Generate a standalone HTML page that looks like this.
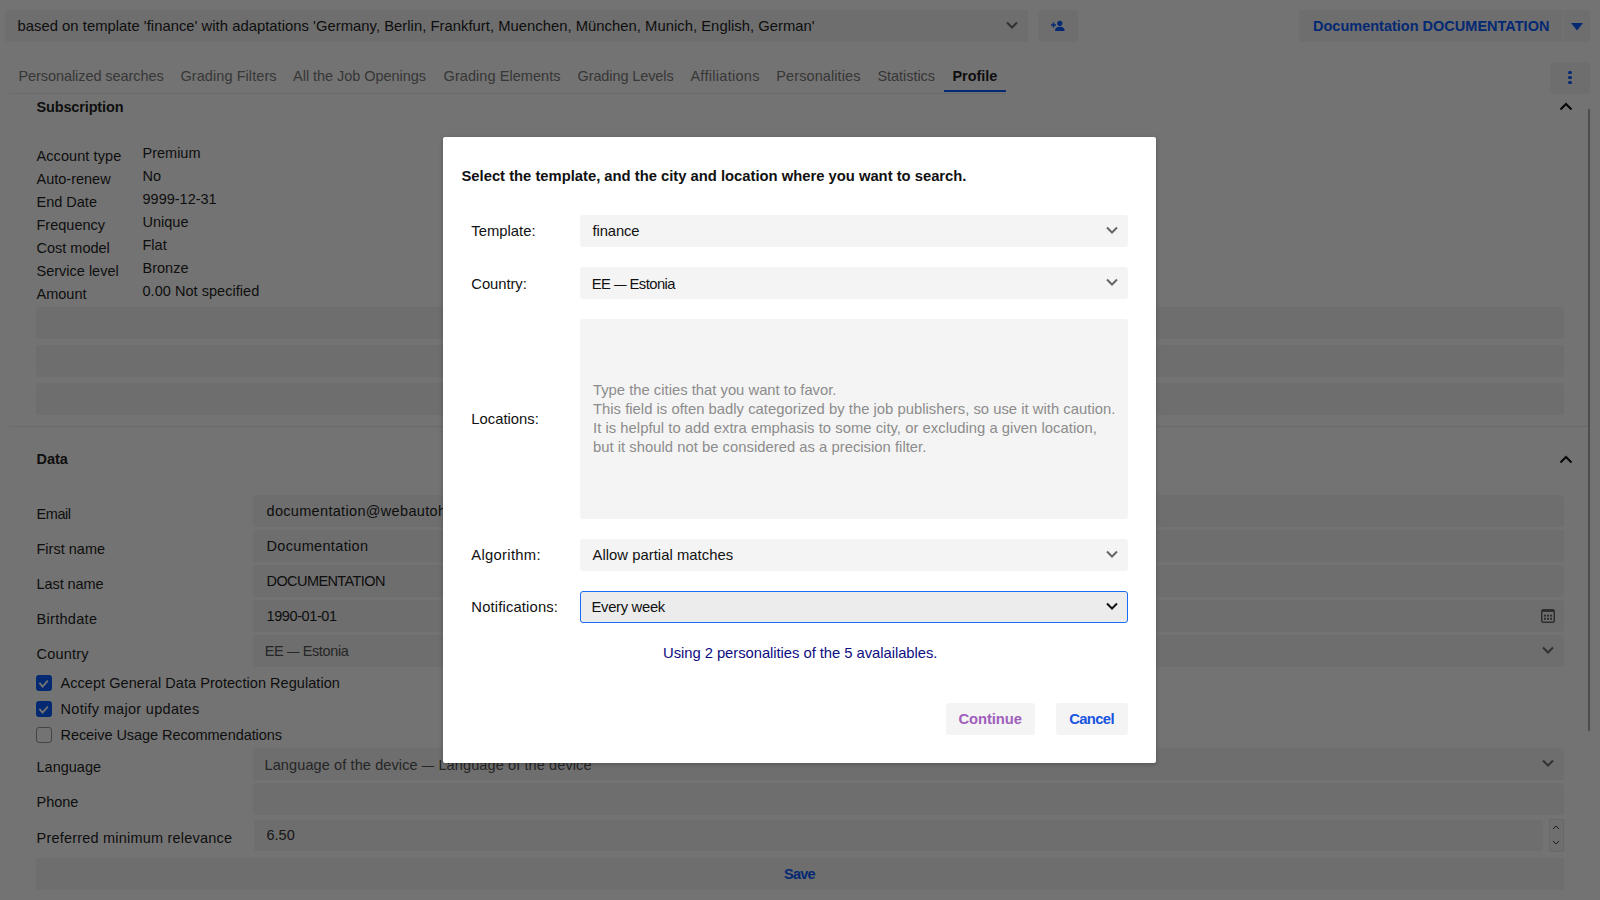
<!DOCTYPE html>
<html><head><meta charset="utf-8"><title>Profile</title>
<style>
html,body{margin:0;padding:0;width:1600px;height:900px;overflow:hidden;background:#fff;font-family:"Liberation Sans", sans-serif;}
#page,#dlg{position:absolute;left:0;top:0;width:1600px;height:900px;}
#ov{position:absolute;left:0;top:0;width:1600px;height:900px;background:rgba(0,0,0,0.55);}
</style></head><body>
<div id="page">
<div style="position:absolute;left:5px;top:10px;width:1022.5px;height:31.5px;background:#f3f3f3;border-radius:3px"></div>
<svg style="position:absolute;left:1005px;top:20px" width="14" height="11" viewBox="0 0 14 11"><path d="M2 2.5 L7 7.5 L12 2.5" fill="none" stroke="#6a6a6a" stroke-width="2"/></svg>
<div style="position:absolute;left:1038px;top:10px;width:40px;height:31.5px;background:#f3f3f3;border-radius:3px"></div>
<svg style="position:absolute;left:1050px;top:19px" width="16" height="14" viewBox="0 0 16 14"><circle cx="9.8" cy="4.3" r="2.6" fill="#0a5cff"/><path d="M5 12 C5 8.6 7.5 7.8 9.8 7.8 C12.1 7.8 14.6 8.6 14.6 12 Z" fill="#0a5cff"/><path d="M1 6 H6 M3.5 3.5 V8.5" stroke="#0a5cff" stroke-width="1.5"/></svg>
<div style="position:absolute;left:1299px;top:10px;width:264px;height:31.5px;background:#f3f3f3;border-radius:3px 0 0 3px"></div>
<div style="position:absolute;left:1564px;top:10px;width:26px;height:31.5px;background:#f3f3f3;border-radius:0 3px 3px 0"></div>
<svg style="position:absolute;left:1570px;top:22px" width="14" height="10" viewBox="0 0 14 10"><path d="M1 1 H13 L7 8.5 Z" fill="#0a5cff"/></svg>
<div style="position:absolute;left:10px;top:93px;width:996px;height:1px;background:#eaeaea"></div>
<div style="position:absolute;left:944px;top:90px;width:62px;height:2px;background:#0a5cff"></div>
<div style="position:absolute;left:1550px;top:62px;width:40px;height:31.5px;background:#f3f3f3;border-radius:3px"></div>
<div style="position:absolute;left:1568px;top:70.5px;width:3.5px;height:3.5px;border-radius:50%;background:#0a5cff"></div>
<div style="position:absolute;left:1568px;top:75.5px;width:3.5px;height:3.5px;border-radius:50%;background:#0a5cff"></div>
<div style="position:absolute;left:1568px;top:80.5px;width:3.5px;height:3.5px;border-radius:50%;background:#0a5cff"></div>
<svg style="position:absolute;left:1559px;top:101px" width="14" height="11" viewBox="0 0 14 11"><path d="M1.5 8.5 L7 3 L12.5 8.5" fill="none" stroke="#111" stroke-width="2"/></svg>
<div style="position:absolute;left:1588px;top:109px;width:2px;height:622px;background:#aaa"></div>
<div style="position:absolute;left:36px;top:307px;width:1527.5px;height:31.5px;background:#f3f3f3;border-radius:3px"></div>
<div style="position:absolute;left:36px;top:345px;width:1527.5px;height:31.5px;background:#f3f3f3;border-radius:3px"></div>
<div style="position:absolute;left:36px;top:383px;width:1527.5px;height:31.5px;background:#f3f3f3;border-radius:3px"></div>
<div style="position:absolute;left:10px;top:426px;width:1578px;height:1px;background:#eaeaea"></div>
<svg style="position:absolute;left:1559px;top:453.5px" width="14" height="11" viewBox="0 0 14 11"><path d="M1.5 8.5 L7 3 L12.5 8.5" fill="none" stroke="#111" stroke-width="2"/></svg>
<div style="position:absolute;left:253px;top:495px;width:1310.5px;height:31.5px;background:#f3f3f3;border-radius:3px"></div>
<div style="position:absolute;left:253px;top:530px;width:1310.5px;height:31.5px;background:#f3f3f3;border-radius:3px"></div>
<div style="position:absolute;left:253px;top:565px;width:1310.5px;height:31.5px;background:#f3f3f3;border-radius:3px"></div>
<div style="position:absolute;left:253px;top:600px;width:1310.5px;height:31.5px;background:#f3f3f3;border-radius:3px"></div>
<div style="position:absolute;left:253px;top:635px;width:1310.5px;height:31.5px;background:#f3f3f3;border-radius:3px"></div>
<svg style="position:absolute;left:1541px;top:609px" width="14" height="14" viewBox="0 0 14 14"><rect x="0" y="0" width="14" height="14" rx="2.2" fill="#666"/><rect x="1.5" y="3" width="11" height="9.5" fill="#f3f3f3"/><g fill="#666"><rect x="3" y="5.6" width="2" height="2"/><rect x="6" y="5.6" width="2" height="2"/><rect x="9" y="5.6" width="2" height="2"/><rect x="3" y="8.8" width="2" height="2"/><rect x="6" y="8.8" width="2" height="2"/><rect x="9" y="8.8" width="2" height="2"/></g></svg>
<svg style="position:absolute;left:1541px;top:645px" width="14" height="11" viewBox="0 0 14 11"><path d="M2 2.5 L7 7.5 L12 2.5" fill="none" stroke="#6a6a6a" stroke-width="2"/></svg>
<svg style="position:absolute;left:36px;top:675px" width="16" height="16" viewBox="0 0 16 16"><rect x="0" y="0" width="16" height="16" rx="3" fill="#0a5cff"/><path d="M3.4 7.9 L6.6 11.6 L11.8 5.6" fill="none" stroke="#fff" stroke-width="1.8"/></svg>
<svg style="position:absolute;left:36px;top:701px" width="16" height="16" viewBox="0 0 16 16"><rect x="0" y="0" width="16" height="16" rx="3" fill="#0a5cff"/><path d="M3.4 7.9 L6.6 11.6 L11.8 5.6" fill="none" stroke="#fff" stroke-width="1.8"/></svg>
<div style="position:absolute;left:36px;top:727px;width:14px;height:14px;border:1px solid #999;border-radius:3px;background:#fff"></div>
<div style="position:absolute;left:253px;top:748px;width:1310.5px;height:31.5px;background:#f3f3f3;border-radius:3px"></div>
<svg style="position:absolute;left:1541px;top:758px" width="14" height="11" viewBox="0 0 14 11"><path d="M2 2.5 L7 7.5 L12 2.5" fill="none" stroke="#6a6a6a" stroke-width="2"/></svg>
<div style="position:absolute;left:253px;top:783px;width:1310.5px;height:31.5px;background:#f3f3f3;border-radius:3px"></div>
<div style="position:absolute;left:254px;top:819.5px;width:1288.5px;height:31.5px;background:#f3f3f3;border-radius:3px"></div>
<div style="position:absolute;left:1548.5px;top:818.5px;width:13px;height:31.5px;border:1px solid #e6e6e6;border-radius:2px;background:#f6f6f6"></div>
<svg style="position:absolute;left:1551px;top:823px" width="10" height="24" viewBox="0 0 10 24"><path d="M2 6 L5 3 L8 6 M2 18 L5 21 L8 18" fill="none" stroke="#444" stroke-width="1"/></svg>
<div style="position:absolute;left:36px;top:858px;width:1527.5px;height:31.5px;background:#f3f3f3;border-radius:3px"></div>
<div style="position:absolute;left:17.50px;top:16.00px;line-height:20px;white-space:pre;font-size:14.8px;font-weight:400;color:#1f1f1f;letter-spacing:0.027px;">based on template &#x27;finance&#x27; with adaptations &#x27;Germany, Berlin, Frankfurt, Muenchen, München, Munich, English, German&#x27;</div>
<div style="position:absolute;left:1313.00px;top:16.00px;line-height:20px;white-space:pre;font-size:14.5px;font-weight:700;color:#0a5cff;letter-spacing:0.004px;">Documentation DOCUMENTATION</div>
<div style="position:absolute;left:18.40px;top:65.70px;line-height:20px;white-space:pre;font-size:14.5px;font-weight:400;color:#7a7a7a;letter-spacing:-0.070px;">Personalized searches</div>
<div style="position:absolute;left:180.40px;top:65.70px;line-height:20px;white-space:pre;font-size:14.5px;font-weight:400;color:#7a7a7a;letter-spacing:0.079px;">Grading Filters</div>
<div style="position:absolute;left:293.10px;top:65.70px;line-height:20px;white-space:pre;font-size:14.5px;font-weight:400;color:#7a7a7a;letter-spacing:-0.048px;">All the Job Openings</div>
<div style="position:absolute;left:443.60px;top:65.70px;line-height:20px;white-space:pre;font-size:14.5px;font-weight:400;color:#7a7a7a;letter-spacing:0.056px;">Grading Elements</div>
<div style="position:absolute;left:577.50px;top:65.70px;line-height:20px;white-space:pre;font-size:14.5px;font-weight:400;color:#7a7a7a;letter-spacing:-0.102px;">Grading Levels</div>
<div style="position:absolute;left:690.40px;top:65.70px;line-height:20px;white-space:pre;font-size:14.5px;font-weight:400;color:#7a7a7a;letter-spacing:0.297px;">Affiliations</div>
<div style="position:absolute;left:776.30px;top:65.70px;line-height:20px;white-space:pre;font-size:14.5px;font-weight:400;color:#7a7a7a;letter-spacing:0.090px;">Personalities</div>
<div style="position:absolute;left:877.50px;top:65.70px;line-height:20px;white-space:pre;font-size:14.5px;font-weight:400;color:#7a7a7a;letter-spacing:-0.057px;">Statistics</div>
<div style="position:absolute;left:952.50px;top:65.70px;line-height:20px;white-space:pre;font-size:14.5px;font-weight:700;color:#1f1f1f;letter-spacing:-0.062px;">Profile</div>
<div style="position:absolute;left:36.50px;top:96.80px;line-height:20px;white-space:pre;font-size:14.5px;font-weight:700;color:#1f1f1f;letter-spacing:-0.148px;">Subscription</div>
<div style="position:absolute;left:36.50px;top:146.10px;line-height:20px;white-space:pre;font-size:14.5px;font-weight:400;color:#1f1f1f;letter-spacing:0.079px;">Account type</div>
<div style="position:absolute;left:142.50px;top:143.30px;line-height:20px;white-space:pre;font-size:14.5px;font-weight:400;color:#1f1f1f;letter-spacing:0.000px;">Premium</div>
<div style="position:absolute;left:36.50px;top:169.10px;line-height:20px;white-space:pre;font-size:14.5px;font-weight:400;color:#1f1f1f;letter-spacing:0.000px;">Auto-renew</div>
<div style="position:absolute;left:142.50px;top:166.30px;line-height:20px;white-space:pre;font-size:14.5px;font-weight:400;color:#1f1f1f;letter-spacing:0.000px;">No</div>
<div style="position:absolute;left:36.50px;top:192.10px;line-height:20px;white-space:pre;font-size:14.5px;font-weight:400;color:#1f1f1f;letter-spacing:0.000px;">End Date</div>
<div style="position:absolute;left:142.50px;top:189.30px;line-height:20px;white-space:pre;font-size:14.5px;font-weight:400;color:#1f1f1f;letter-spacing:0.000px;">9999-12-31</div>
<div style="position:absolute;left:36.50px;top:215.10px;line-height:20px;white-space:pre;font-size:14.5px;font-weight:400;color:#1f1f1f;letter-spacing:0.000px;">Frequency</div>
<div style="position:absolute;left:142.50px;top:212.30px;line-height:20px;white-space:pre;font-size:14.5px;font-weight:400;color:#1f1f1f;letter-spacing:0.000px;">Unique</div>
<div style="position:absolute;left:36.50px;top:238.10px;line-height:20px;white-space:pre;font-size:14.5px;font-weight:400;color:#1f1f1f;letter-spacing:0.000px;">Cost model</div>
<div style="position:absolute;left:142.50px;top:235.30px;line-height:20px;white-space:pre;font-size:14.5px;font-weight:400;color:#1f1f1f;letter-spacing:0.000px;">Flat</div>
<div style="position:absolute;left:36.50px;top:261.10px;line-height:20px;white-space:pre;font-size:14.5px;font-weight:400;color:#1f1f1f;letter-spacing:0.000px;">Service level</div>
<div style="position:absolute;left:142.50px;top:258.30px;line-height:20px;white-space:pre;font-size:14.5px;font-weight:400;color:#1f1f1f;letter-spacing:0.000px;">Bronze</div>
<div style="position:absolute;left:36.50px;top:284.10px;line-height:20px;white-space:pre;font-size:14.5px;font-weight:400;color:#1f1f1f;letter-spacing:0.000px;">Amount</div>
<div style="position:absolute;left:142.50px;top:281.30px;line-height:20px;white-space:pre;font-size:14.5px;font-weight:400;color:#1f1f1f;letter-spacing:0.042px;">0.00 Not specified</div>
<div style="position:absolute;left:36.50px;top:449.00px;line-height:20px;white-space:pre;font-size:14.5px;font-weight:700;color:#1f1f1f;letter-spacing:0.000px;">Data</div>
<div style="position:absolute;left:36.50px;top:504.00px;line-height:20px;white-space:pre;font-size:14.5px;font-weight:400;color:#1f1f1f;letter-spacing:-0.416px;">Email</div>
<div style="position:absolute;left:266.50px;top:500.50px;line-height:20px;white-space:pre;font-size:14.5px;font-weight:400;color:#1f1f1f;letter-spacing:0.320px;">documentation@webautohunter.com</div>
<div style="position:absolute;left:36.50px;top:539.00px;line-height:20px;white-space:pre;font-size:14.5px;font-weight:400;color:#1f1f1f;letter-spacing:0.011px;">First name</div>
<div style="position:absolute;left:266.50px;top:535.50px;line-height:20px;white-space:pre;font-size:14.5px;font-weight:400;color:#1f1f1f;letter-spacing:0.331px;">Documentation</div>
<div style="position:absolute;left:36.50px;top:574.00px;line-height:20px;white-space:pre;font-size:14.5px;font-weight:400;color:#1f1f1f;letter-spacing:-0.077px;">Last name</div>
<div style="position:absolute;left:266.50px;top:570.50px;line-height:20px;white-space:pre;font-size:14.5px;font-weight:400;color:#1f1f1f;letter-spacing:-0.578px;">DOCUMENTATION</div>
<div style="position:absolute;left:36.50px;top:609.00px;line-height:20px;white-space:pre;font-size:14.5px;font-weight:400;color:#1f1f1f;letter-spacing:0.307px;">Birthdate</div>
<div style="position:absolute;left:266.50px;top:605.50px;line-height:20px;white-space:pre;font-size:14.5px;font-weight:400;color:#1f1f1f;letter-spacing:-0.397px;">1990-01-01</div>
<div style="position:absolute;left:36.50px;top:644.00px;line-height:20px;white-space:pre;font-size:14.5px;font-weight:400;color:#1f1f1f;letter-spacing:0.203px;">Country</div>
<div style="position:absolute;left:264.80px;top:640.50px;line-height:20px;white-space:pre;font-size:14.5px;font-weight:400;color:#555;letter-spacing:-0.372px;">EE <span style="font-size:0.85em">—</span> Estonia</div>
<div style="position:absolute;left:60.50px;top:673.00px;line-height:20px;white-space:pre;font-size:14.5px;font-weight:400;color:#1f1f1f;letter-spacing:0.053px;">Accept General Data Protection Regulation</div>
<div style="position:absolute;left:60.50px;top:699.00px;line-height:20px;white-space:pre;font-size:14.5px;font-weight:400;color:#1f1f1f;letter-spacing:0.301px;">Notify major updates</div>
<div style="position:absolute;left:60.50px;top:725.00px;line-height:20px;white-space:pre;font-size:14.5px;font-weight:400;color:#1f1f1f;letter-spacing:-0.062px;">Receive Usage Recommendations</div>
<div style="position:absolute;left:36.50px;top:757.00px;line-height:20px;white-space:pre;font-size:14.5px;font-weight:400;color:#1f1f1f;letter-spacing:0.000px;">Language</div>
<div style="position:absolute;left:264.50px;top:754.50px;line-height:20px;white-space:pre;font-size:14.5px;font-weight:400;color:#555;letter-spacing:0.111px;">Language of the device <span style="font-size:0.85em">—</span> Language of the device</div>
<div style="position:absolute;left:36.50px;top:791.70px;line-height:20px;white-space:pre;font-size:14.5px;font-weight:400;color:#1f1f1f;letter-spacing:0.000px;">Phone</div>
<div style="position:absolute;left:36.50px;top:827.70px;line-height:20px;white-space:pre;font-size:14.5px;font-weight:400;color:#1f1f1f;letter-spacing:0.208px;">Preferred minimum relevance</div>
<div style="position:absolute;left:266.50px;top:825.00px;line-height:20px;white-space:pre;font-size:14.5px;font-weight:400;color:#333;letter-spacing:0.000px;">6.50</div>
<div style="position:absolute;left:784.00px;top:864.00px;line-height:20px;white-space:pre;font-size:14.5px;font-weight:700;color:#0a5cff;letter-spacing:-0.792px;">Save</div>
</div>
<div id="ov"></div>
<div id="dlg">
<div style="position:absolute;left:443.3px;top:137px;width:712.8px;height:626px;background:#fff;border-radius:2px;box-shadow:0 1px 4px rgba(0,0,0,0.25)"></div>
<div style="position:absolute;left:580px;top:215px;width:548.3px;height:32px;background:#f4f4f4;border-radius:3px"></div>
<svg style="position:absolute;left:1105px;top:225px" width="14" height="11" viewBox="0 0 14 11"><path d="M2 2.5 L7 7.5 L12 2.5" fill="none" stroke="#666" stroke-width="2"/></svg>
<div style="position:absolute;left:580px;top:267px;width:548.3px;height:32px;background:#f4f4f4;border-radius:3px"></div>
<svg style="position:absolute;left:1105px;top:277px" width="14" height="11" viewBox="0 0 14 11"><path d="M2 2.5 L7 7.5 L12 2.5" fill="none" stroke="#666" stroke-width="2"/></svg>
<div style="position:absolute;left:580px;top:319px;width:548.3px;height:200px;background:#f4f4f4;border-radius:3px"></div>
<div style="position:absolute;left:580px;top:539px;width:548.3px;height:32px;background:#f4f4f4;border-radius:3px"></div>
<svg style="position:absolute;left:1105px;top:549px" width="14" height="11" viewBox="0 0 14 11"><path d="M2 2.5 L7 7.5 L12 2.5" fill="none" stroke="#666" stroke-width="2"/></svg>
<div style="position:absolute;left:580px;top:591px;width:546.3px;height:30px;background:#ececec;border:1px solid #1a6bf5;border-radius:3px"></div>
<svg style="position:absolute;left:1105px;top:601px" width="14" height="11" viewBox="0 0 14 11"><path d="M2 2.5 L7 7.5 L12 2.5" fill="none" stroke="#111" stroke-width="2"/></svg>
<div style="position:absolute;left:946px;top:703px;width:89.3px;height:32px;background:#f4f4f4;border-radius:3px"></div>
<div style="position:absolute;left:1056px;top:703px;width:72.4px;height:32px;background:#f4f4f4;border-radius:3px"></div>
<div style="position:absolute;left:461.50px;top:165.75px;line-height:20px;white-space:pre;font-size:14.8px;font-weight:700;color:#111;letter-spacing:-0.010px;">Select the template, and the city and location where you want to search.</div>
<div style="position:absolute;left:471.30px;top:221.25px;line-height:20px;white-space:pre;font-size:14.8px;font-weight:400;color:#111;letter-spacing:0.012px;">Template:</div>
<div style="position:absolute;left:592.50px;top:221.25px;line-height:20px;white-space:pre;font-size:14.8px;font-weight:400;color:#111;letter-spacing:-0.120px;">finance</div>
<div style="position:absolute;left:471.30px;top:273.75px;line-height:20px;white-space:pre;font-size:14.8px;font-weight:400;color:#111;letter-spacing:-0.060px;">Country:</div>
<div style="position:absolute;left:591.80px;top:273.75px;line-height:20px;white-space:pre;font-size:14.8px;font-weight:400;color:#111;letter-spacing:-0.560px;">EE <span style="font-size:0.85em">—</span> Estonia</div>
<div style="position:absolute;left:471.30px;top:409.25px;line-height:20px;white-space:pre;font-size:14.8px;font-weight:400;color:#111;letter-spacing:0.000px;">Locations:</div>
<div style="position:absolute;left:593.00px;top:380.00px;line-height:20px;white-space:pre;font-size:14.8px;font-weight:400;color:#8c8c8c;letter-spacing:0.000px;">Type the cities that you want to favor.</div>
<div style="position:absolute;left:593.00px;top:399.00px;line-height:20px;white-space:pre;font-size:14.8px;font-weight:400;color:#8c8c8c;letter-spacing:0.020px;">This field is often badly categorized by the job publishers, so use it with caution.</div>
<div style="position:absolute;left:593.00px;top:418.00px;line-height:20px;white-space:pre;font-size:14.8px;font-weight:400;color:#8c8c8c;letter-spacing:0.031px;">It is helpful to add extra emphasis to some city, or excluding a given location,</div>
<div style="position:absolute;left:593.00px;top:437.00px;line-height:20px;white-space:pre;font-size:14.8px;font-weight:400;color:#8c8c8c;letter-spacing:0.019px;">but it should not be considered as a precision filter.</div>
<div style="position:absolute;left:471.30px;top:545.40px;line-height:20px;white-space:pre;font-size:14.8px;font-weight:400;color:#111;letter-spacing:0.299px;">Algorithm:</div>
<div style="position:absolute;left:592.50px;top:545.40px;line-height:20px;white-space:pre;font-size:14.8px;font-weight:400;color:#111;letter-spacing:0.039px;">Allow partial matches</div>
<div style="position:absolute;left:471.30px;top:597.40px;line-height:20px;white-space:pre;font-size:14.8px;font-weight:400;color:#111;letter-spacing:0.152px;">Notifications:</div>
<div style="position:absolute;left:591.50px;top:597.40px;line-height:20px;white-space:pre;font-size:14.8px;font-weight:400;color:#111;letter-spacing:-0.309px;">Every week</div>
<div style="position:absolute;left:663.00px;top:642.80px;line-height:20px;white-space:pre;font-size:14.8px;font-weight:400;color:#0d0d82;letter-spacing:-0.046px;">Using 2 personalities of the 5 avalailables.</div>
<div style="position:absolute;left:958.50px;top:708.80px;line-height:20px;white-space:pre;font-size:14.8px;font-weight:700;color:#a05fbc;letter-spacing:-0.087px;">Continue</div>
<div style="position:absolute;left:1069.20px;top:708.80px;line-height:20px;white-space:pre;font-size:14.8px;font-weight:700;color:#1a55e0;letter-spacing:-0.626px;">Cancel</div>
</div>
</body></html>
